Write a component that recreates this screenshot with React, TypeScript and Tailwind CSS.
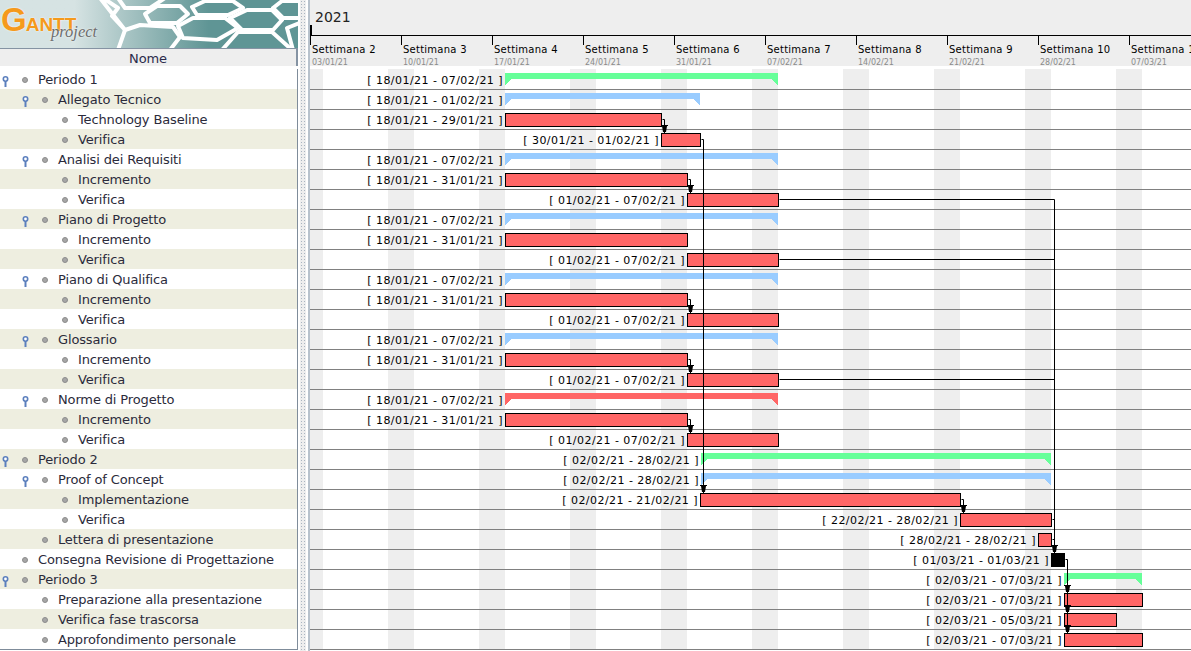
import React from "react";

type Task = {
	name: string;
	level: number;
	fold?: boolean;
	dates: string;
	kind: "green" | "blue" | "redsum" | "bar" | "milestone";
	from: number;
	to: number;
};

const ORIGIN_X = 310;
const ORIGIN_Y = 69;

const tasks: Task[] = [
	{ name: "Periodo 1", level: 0, fold: true, dates: "18/01/21 - 07/02/21", kind: "green", from: 505, to: 778 },
	{ name: "Allegato Tecnico", level: 1, fold: true, dates: "18/01/21 - 01/02/21", kind: "blue", from: 505, to: 700 },
	{ name: "Technology Baseline", level: 2, dates: "18/01/21 - 29/01/21", kind: "bar", from: 505, to: 662 },
	{ name: "Verifica", level: 2, dates: "30/01/21 - 01/02/21", kind: "bar", from: 661, to: 701 },
	{ name: "Analisi dei Requisiti", level: 1, fold: true, dates: "18/01/21 - 07/02/21", kind: "blue", from: 505, to: 778 },
	{ name: "Incremento", level: 2, dates: "18/01/21 - 31/01/21", kind: "bar", from: 505, to: 688 },
	{ name: "Verifica", level: 2, dates: "01/02/21 - 07/02/21", kind: "bar", from: 687, to: 779 },
	{ name: "Piano di Progetto", level: 1, fold: true, dates: "18/01/21 - 07/02/21", kind: "blue", from: 505, to: 778 },
	{ name: "Incremento", level: 2, dates: "18/01/21 - 31/01/21", kind: "bar", from: 505, to: 688 },
	{ name: "Verifica", level: 2, dates: "01/02/21 - 07/02/21", kind: "bar", from: 687, to: 779 },
	{ name: "Piano di Qualifica", level: 1, fold: true, dates: "18/01/21 - 07/02/21", kind: "blue", from: 505, to: 778 },
	{ name: "Incremento", level: 2, dates: "18/01/21 - 31/01/21", kind: "bar", from: 505, to: 688 },
	{ name: "Verifica", level: 2, dates: "01/02/21 - 07/02/21", kind: "bar", from: 687, to: 779 },
	{ name: "Glossario", level: 1, fold: true, dates: "18/01/21 - 07/02/21", kind: "blue", from: 505, to: 778 },
	{ name: "Incremento", level: 2, dates: "18/01/21 - 31/01/21", kind: "bar", from: 505, to: 688 },
	{ name: "Verifica", level: 2, dates: "01/02/21 - 07/02/21", kind: "bar", from: 687, to: 779 },
	{ name: "Norme di Progetto", level: 1, fold: true, dates: "18/01/21 - 07/02/21", kind: "redsum", from: 505, to: 778 },
	{ name: "Incremento", level: 2, dates: "18/01/21 - 31/01/21", kind: "bar", from: 505, to: 688 },
	{ name: "Verifica", level: 2, dates: "01/02/21 - 07/02/21", kind: "bar", from: 687, to: 779 },
	{ name: "Periodo 2", level: 0, fold: true, dates: "02/02/21 - 28/02/21", kind: "green", from: 701, to: 1051 },
	{ name: "Proof of Concept", level: 1, fold: true, dates: "02/02/21 - 28/02/21", kind: "blue", from: 701, to: 1051 },
	{ name: "Implementazione", level: 2, dates: "02/02/21 - 21/02/21", kind: "bar", from: 700, to: 961 },
	{ name: "Verifica", level: 2, dates: "22/02/21 - 28/02/21", kind: "bar", from: 960, to: 1052 },
	{ name: "Lettera di presentazione", level: 1, dates: "28/02/21 - 28/02/21", kind: "bar", from: 1038, to: 1052 },
	{ name: "Consegna Revisione di Progettazione", level: 0, dates: "01/03/21 - 01/03/21", kind: "milestone", from: 1051, to: 1065 },
	{ name: "Periodo 3", level: 0, fold: true, dates: "02/03/21 - 07/03/21", kind: "green", from: 1064, to: 1142 },
	{ name: "Preparazione alla presentazione", level: 1, dates: "02/03/21 - 07/03/21", kind: "bar", from: 1064, to: 1143 },
	{ name: "Verifica fase trascorsa", level: 1, dates: "02/03/21 - 05/03/21", kind: "bar", from: 1064, to: 1117 },
	{ name: "Approfondimento personale", level: 1, dates: "02/03/21 - 07/03/21", kind: "bar", from: 1064, to: 1143 },
];

const weeks = [
	["Settimana 2", "03/01/21"],
	["Settimana 3", "10/01/21"],
	["Settimana 4", "17/01/21"],
	["Settimana 5", "24/01/21"],
	["Settimana 6", "31/01/21"],
	["Settimana 7", "07/02/21"],
	["Settimana 8", "14/02/21"],
	["Settimana 9", "21/02/21"],
	["Settimana 10", "28/02/21"],
	["Settimana 11", "07/03/21"],
];

// elbow links between bars, page coordinates
const links = [
	"M662 119H664V133",
	"M701 139H703V493",
	"M688 179H690V193",
	"M779 199H1054V553",
	"M779 259H1054",
	"M688 299H690V313",
	"M688 359H690V373",
	"M779 379H1054",
	"M688 419H690V433",
	"M961 499H963V513",
	"M1052 519H1054",
	"M1052 539H1054",
	"M1065 559H1067V633",
];
const arrows: [number, number][] = [
	[664, 133],
	[690, 193],
	[690, 313],
	[690, 373],
	[690, 433],
	[703, 493],
	[963, 513],
	[1054, 553],
	[1067, 593],
	[1067, 613],
	[1067, 633],
];

const hexes = [
	"192,7 205,1 233,1 243,8 228,15 197,15",
	"178,26 193,18 225,18 238,28 217,40 183,38",
	"230,18 247,10 272,10 282,20 273,30 242,30",
	"222,50 238,32 272,32 292,50",
	"273,8 282,1 302,1 302,18 283,18",
	"287,28 302,22 302,50 293,50",
	"145,14 157,6 180,6 188,14 177,23 150,23",
	"118,50 125,30 140,25 173,27 180,37 170,50",
	"118,-2 165,-2 150,8 125,8",
	"100,-2 103,-2 118,8 112,16 125,30",
];

const FoldIcon = () => (
	<svg width="7" height="11" viewBox="0 0 7 11" className="block">
		<circle cx="3.5" cy="3" r="2.2" fill="#fff" stroke="#5b7fbd" strokeWidth="1.6" />
		<path d="M3.5 5V11" stroke="#5b7fbd" strokeWidth="2" />
	</svg>
);

const Dot = () => (
	<span className="block h-[6px] w-[6px] rounded-full border border-[#8c8c8c] bg-[#a6a6a6]" />
);

const TreeRow = ({ task, index }: { task: Task; index: number }) => (
	<div
		className={`relative flex h-5 items-center pt-[2px] font-['DejaVu_Sans',sans-serif] text-[13px] tracking-[-0.14px] text-[#2b2b3b] ${
			index % 2 === 1 ? "bg-[#eeeee0]" : "bg-white"
		}`}
		style={{ paddingLeft: task.level * 20 }}
	>
		<span className="flex w-[22px] pl-[2px] pt-[2px]">
			{task.fold && <FoldIcon />}
		</span>
		<span className="flex w-[16px] justify-start pb-[1px]">
			<Dot />
		</span>
		<span className="whitespace-nowrap">{task.name}</span>
	</div>
);

const SummaryBar = ({ task }: { task: Task }) => {
	const color =
		task.kind === "green"
			? "#66ff99"
			: task.kind === "blue"
				? "#99ccff"
				: "#ff6666";
	const w = task.to - task.from;
	return (
		<svg
			width={w}
			height="12"
			className="absolute top-[3px]"
			style={{ left: task.from - ORIGIN_X }}
		>
			<path
				d={`M0 0H${w}V12H${w - 1}V11H${w - 2}V10H${w - 3}V9H${w - 4}V8H${w - 5}V7H${w - 6}V6H6V7H5V8H4V9H3V10H2V11H1V12H0Z`}
				fill={color}
			/>
		</svg>
	);
};

const ChartRow = ({ task }: { task: Task }) => {
	const left = task.from - ORIGIN_X;
	return (
		<div className="relative h-5 border-t border-[#808080] first:border-transparent">
			<span
				className="absolute top-[3px] -translate-x-full whitespace-nowrap pr-[2px] font-['DejaVu_Sans',sans-serif] text-[11px] leading-4 tracking-[0.45px] text-black"
				style={{ left: left }}
			>
				[ {task.dates} ]
			</span>
			{task.kind === "bar" && (
				<div
					className="absolute top-[3px] h-[14px] border border-black bg-[#ff6666]"
					style={{ left: left, width: task.to - task.from }}
				/>
			)}
			{task.kind === "milestone" && (
				<div
					className="absolute top-[3px] h-[14px] bg-black"
					style={{ left: left, width: task.to - task.from }}
				/>
			)}
			{(task.kind === "green" ||
				task.kind === "blue" ||
				task.kind === "redsum") && <SummaryBar task={task} />}
		</div>
	);
};

const Logo = () => (
	<div className="relative h-12 overflow-hidden bg-gradient-to-r from-[#d6e3e3] from-25% to-[#5f9595] to-70%">
		<svg width="300" height="48" viewBox="0 0 300 48" className="absolute left-0 top-0">
			<g fill="none" stroke="#fff" strokeWidth="4" strokeLinejoin="round">
				{hexes.map((pts) => (
					<polygon key={pts} points={pts} />
				))}
			</g>
		</svg>
		<div className="absolute left-[1px] top-[2px] flex items-baseline whitespace-nowrap font-['Liberation_Sans',sans-serif] font-bold text-[#f59a1c] [text-shadow:0_0_2px_#fff]">
			<span className="text-[33px] leading-9">G</span>
			<span className="-ml-[1px] text-[19px] leading-9">ANTT</span>
		</div>
		<div className="absolute left-[51px] top-[22px] font-['Liberation_Serif',serif] text-[16.5px] italic leading-5 text-[#6d6d6d] [text-shadow:0_0_2px_#fff]">
			project
		</div>
	</div>
);

const LeftPanel = () => (
	<div className="flex w-[298px] shrink-0 flex-col">
		<Logo />
		<div className="flex h-[18px] items-center justify-center border-t border-r-2 border-[#8593a3] bg-[#eeeeee] pt-[2px] font-['DejaVu_Sans',sans-serif] text-[13px] tracking-[-0.14px] text-[#2b2b4b]">
			Nome
		</div>
		<div className="h-[3px] bg-white" />
		<div className="border-r border-b border-[#7f8c9a]">
			{tasks.map((task, i) => (
				<TreeRow key={i} task={task} index={i} />
			))}
		</div>
	</div>
);

const Divider = () => (
	<div className="flex w-[12px] shrink-0 justify-center bg-white">
		<div className="ml-[2px] w-[6px] bg-[#eeeeee] bg-[radial-gradient(#a9b4c0_1px,transparent_1px)] bg-[length:3px_3px]" />
		<div className="ml-auto w-[2px] bg-[#b8c2cc]" />
	</div>
);

const ChartHeader = () => (
	<div className="relative h-[66px] overflow-hidden bg-[#eeeeee]">
		<div className="h-[36px] border-b border-black pl-[5px] pt-[7px] font-['DejaVu_Sans',sans-serif] text-[14px] leading-5 text-[#222]">
			2021
		</div>
		<div className="absolute left-0 top-[25px] h-[10px] w-[2px] bg-black" />
		<div className="flex whitespace-nowrap">
			{weeks.map(([label, date]) => (
				<div key={date} className="w-[91px] shrink-0">
					<div className="h-[9px] border-l border-black" />
					<div className="h-[11px] pl-[2px] font-['DejaVu_Sans',sans-serif] text-[10px] leading-[10px] tracking-[0.25px] text-black">
						{label}
					</div>
					<div className="h-[10px] pl-[2px] pt-[2px] font-['DejaVu_Sans',sans-serif] text-[8px] leading-[10px] text-[#8a8a8a]">
						{date}
					</div>
				</div>
			))}
		</div>
	</div>
);

const ChartBody = () => {
	const weekends = Array.from({ length: 10 }, (_, i) => 78 + i * 91);
	return (
		<div className="relative mt-[3px]">
			{/* weekend stripes */}
			<div className="absolute left-0 top-0 h-[580px] w-[13px] bg-[#eeeeee]" />
			{weekends.map((x) => (
				<div
					key={x}
					className="absolute top-0 h-[580px] w-[26px] bg-[#eeeeee]"
					style={{ left: x }}
				/>
			))}
			<div className="relative border-b border-[#808080]">
				{tasks.map((task, i) => (
					<ChartRow key={i} task={task} />
				))}
			</div>
			<svg
				width="881"
				height="581"
				viewBox={`${ORIGIN_X} ${ORIGIN_Y} 881 581`}
				className="absolute left-0 top-0"
			>
				{links.map((d) => (
					<path key={d} d={d} transform="translate(0.5 0.5)" fill="none" stroke="#000" strokeWidth="1" />
				))}
				{arrows.map(([x, y]) => (
					<path
						key={`${x}-${y}`}
						d={`M${x - 3} ${y - 8}H${x + 4}V${y - 7}H${x + 3}L${x + 2} ${y - 1}H${x - 1}L${x - 2} ${y - 7}H${x - 3}Z`}
						fill="#000"
					/>
				))}
			</svg>
		</div>
	);
};

export default function App() {
	return (
		<div className="flex h-[651px] w-[1191px] overflow-hidden bg-white">
			<LeftPanel />
			<Divider />
			<div className="min-w-0 flex-1 overflow-hidden">
				<ChartHeader />
				<ChartBody />
			</div>
		</div>
	);
}
